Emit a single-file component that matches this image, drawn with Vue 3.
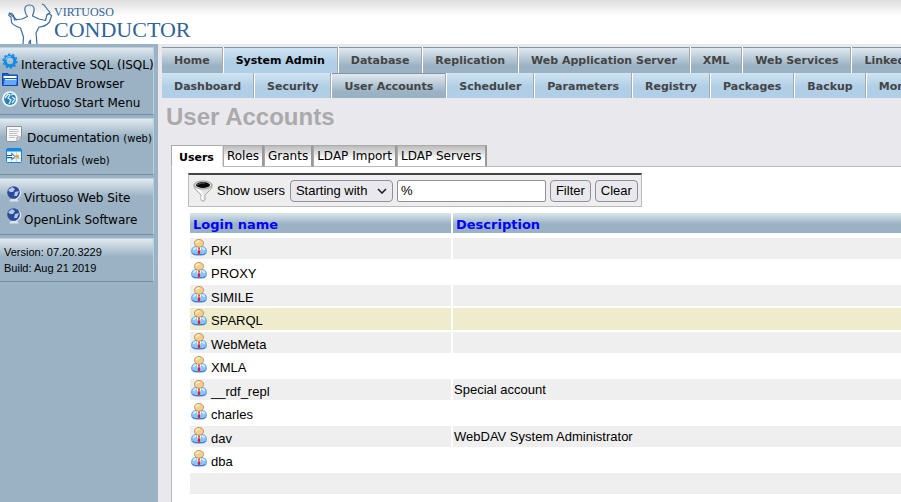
<script setup>
import { ref } from 'vue'

const quick = [
  { icon: 'gear', label: 'Interactive SQL (ISQL)' },
  { icon: 'folder', label: 'WebDAV Browser' },
  { icon: 'menu', label: 'Virtuoso Start Menu' }
]
const docs = [
  { icon: 'doc', label: 'Documentation' },
  { icon: 'tutorial', label: 'Tutorials' }
]
const sites = ['Virtuoso Web Site', 'OpenLink Software']
const sections = ['Home', 'System Admin', 'Database', 'Replication', 'Web Application Server', 'XML', 'Web Services', 'Linked Data']
const pages = ['Dashboard', 'Security', 'User Accounts', 'Scheduler', 'Parameters', 'Registry', 'Packages', 'Backup', 'Monitor']
const tabs = ['Users', 'Roles', 'Grants', 'LDAP Import', 'LDAP Servers']
const users = [
  { name: 'PKI' }, { name: 'PROXY' }, { name: 'SIMILE' }, { name: 'SPARQL', hot: true }, { name: 'WebMeta' },
  { name: 'XMLA' }, { name: '__rdf_repl', note: 'Special account' }, { name: 'charles' },
  { name: 'dav', note: 'WebDAV System Administrator' }, { name: 'dba' }
]
const mask = ref('%')
const mode = ref('Starting with')
</script>

<template>
  <div class="page">
    <header class="top">
      <svg class="figure" width="46" height="41" viewBox="0 0 46 41" fill="none" stroke="#3d6d9e" stroke-width="1.2" stroke-linejoin="round" aria-hidden="true">
        <path d="M15 41L15.500 34 12.500 25Q4 22 3.500 19L3 14 .8 12.500 1.500 10 4 10.500 5.500 12.500 6.500 17 14 16 19.500 13.500Q17.500 11 17 8 16 2 21.500 2 27 2 26 8L24.500 13 31 16 37.500 17.500 39 11.500 41 10.500 43.500 12.500 41.500 19Q37 24 31 24L28 30 29 41"/>
        <path d="M34 1L36 2 42 9.500 39 12M1 10L9 17M22.500 41V37L21 39V41"/>
      </svg>
      <div class="brand"><span class="brand-small">VIRTUOSO</span><span class="brand-big">CONDUCTOR</span></div>
    </header>
    <div class="body">
      <aside class="side">
        <nav class="box quick">
          <a v-for="q in quick" :key="q.label" href="#" class="line">
            <svg v-if="q.icon === 'gear'" width="16" height="16" viewBox="0 0 16 16"><circle cx="8" cy="8" r="4.800" fill="none" stroke="#1689e8" stroke-width="3"/><circle cx="8" cy="8" r="6.800" fill="none" stroke="#1689e8" stroke-width="1.600" stroke-dasharray="2.300 1.970"/><path d="M3.500 7Q5 3 9 3.500" fill="none" stroke="#65c4ff" stroke-width="1.500"/></svg>
            <svg v-else-if="q.icon === 'folder'" width="16" height="16" viewBox="0 0 16 16"><path d="M.5 1.500H6L7 3H15.500V13.500H.5Z" fill="#1761d1" stroke="#1146b8"/><path d="M1.500 4H14.500V6H1.500Z" fill="#fff"/><path d="M3 7H15L14 13H1.500Z" fill="#65a8f4"/><path d="M3 7.500H14" stroke="#d7edff"/></svg>
            <svg v-else width="16" height="16" viewBox="0 0 16 16"><circle cx="8" cy="8" r="7.800" fill="#eef8ff"/><circle cx="8" cy="8" r="6" fill="#2a7fb4"/><path d="M3 7L6 3 8 4 6 7 9 9 7 13M9 4L12 3M10 12L13 8 10 6" fill="none" stroke="#d7f3ff" stroke-width="1.300"/></svg>
            <span>{{ q.label }}</span>
          </a>
        </nav>
        <nav class="box docs">
          <a v-for="d in docs" :key="d.label" href="#" class="line">
            <svg v-if="d.icon === 'doc'" width="16" height="16" viewBox="0 0 16 16"><path d="M.5.500H15.500V11L11 15.500H.5Z" fill="#f8f8f8" stroke="#929292"/><path d="M3 3.500H12M3 5.500H13M3 7.500H11M3 9.500H12M3 11.500H9" stroke="#bcc3cc"/><path d="M11 15.500V11H15.500" fill="#ddd" stroke="#999"/></svg>
            <svg v-else width="16" height="16" viewBox="0 0 16 16"><rect x=".5" y=".5" width="15" height="14" rx="1" fill="#edf6ff" stroke="#1784d2"/><path d="M1 2H15" stroke="#1687da" stroke-width="3"/><path d="M5.500 4V14M10.500 4V14M1 10.500H15" stroke="#b9d7ef"/><path d="M1 7.500H6V5.500L9 8.500 6 11.500V9.500H1" fill="#fff" stroke="#185e9c"/><path d="M9.500 7H13V10H9.500Z" fill="#f3a72c"/></svg>
            <span>{{ d.label }} <small>(web)</small></span>
          </a>
        </nav>
        <nav class="box sites">
          <a v-for="s in sites" :key="s" href="#" class="line">
            <svg width="16" height="16" viewBox="0 0 16 16"><path d="M5 13H11L13 15.500H3Z" fill="#dde2ed"/><path d="M13 3Q17 9 10 13" fill="none" stroke="#e5e9f4" stroke-width="1.500"/><circle cx="7.500" cy="6.500" r="6.300" fill="#294b98"/><path d="M2 4L6 1 9 3 7 6 4 6ZM9 6L13 5 11 10 8 10Z" fill="#b9c6ec"/></svg>
            <span>{{ s }}</span>
          </a>
        </nav>
        <div class="box version"><span>Version: 07.20.3229</span><span>Build: Aug 21 2019</span></div>
      </aside>
      <main class="main">
        <nav class="bar sections"><a v-for="s in sections" :key="s" href="#" :class="{ on: s === 'System Admin' }">{{ s }}</a></nav>
        <nav class="bar pages"><a v-for="p in pages" :key="p" href="#" :class="{ on: p === 'User Accounts' }">{{ p }}</a></nav>
        <h1>User Accounts</h1>
        <nav class="tabs"><a v-for="t in tabs" :key="t" href="#" :class="{ on: t === 'Users' }">{{ t }}</a></nav>
        <section class="panel">
          <form class="filter" @submit.prevent>
            <svg width="20" height="22" viewBox="0 0 20 22" aria-hidden="true"><path d="M1 4.500Q0 8 4 11L8 15V20Q10 22.500 12 20V15L16 11Q20 8 19 4.500Z" fill="#e4e4e4" stroke="#aaa"/><path d="M3.500 8L9.500 14V20" fill="none" stroke="#fff" stroke-width="2"/><ellipse cx="10" cy="5" rx="9" ry="4" fill="#ddd" stroke="#999"/><ellipse cx="10" cy="5" rx="7" ry="3" fill="#080808"/><path d="M4 5Q8 2 12 3" fill="none" stroke="#666"/></svg>
            <label for="mode">Show users</label>
            <span class="pick"><select id="mode" v-model="mode"><option>Starting with</option><option>Containing</option></select><svg width="10" height="6" viewBox="0 0 10 6" fill="none" stroke="#222" stroke-width="1.600" aria-hidden="true"><path d="M1 1L5 5 9 1"/></svg></span>
            <input v-model="mask" type="text" aria-label="Filter text">
            <button type="submit">Filter</button>
            <button type="button">Clear</button>
          </form>
          <table>
            <thead><tr><th><a href="#">Login name</a></th><th><a href="#">Description</a></th></tr></thead>
            <tbody>
              <tr v-for="u in users" :key="u.name" :class="{ hot: u.hot }">
                <td><div class="user">
                  <svg width="16" height="17" viewBox="0 0 16 17" aria-hidden="true"><path d="M.8 14Q-.5 8 5 7.500H11Q16.500 8 15.200 14 14 16.500 8 16 2 16.500 .8 14Z" fill="#8cc4fb" stroke="#5b94da" stroke-width=".8"/><path d="M1.500 14.500Q4 16 8 15.700 12 16 14.500 14.500" fill="none" stroke="#3c73cc"/><path d="M2.500 11Q3 9 5 9M13.500 11Q13 9 11 9" fill="none" stroke="#d9efff" stroke-width="1.800"/><path d="M5.500 8L8 15 10.500 8Z" fill="#fff"/><path d="M7 8.500H9L8.500 10.500 9.300 14 8 15.500 6.700 14 7.500 10.500Z" fill="#dc1822"/><ellipse cx="8" cy="4.300" rx="4.600" ry="3.900" fill="#f5ce8c" stroke="#b08a50" stroke-width=".8"/><path d="M5 4Q6 2 8.500 2" fill="none" stroke="#fff0c9" stroke-width="1.500"/></svg>
                  <span>{{ u.name }}</span></div></td>
                <td>{{ u.note }}</td>
              </tr>
              <tr><td colspan="2"></td></tr>
            </tbody>
          </table>
        </section>
      </main>
    </div>
  </div>
</template>

<style>
body { margin: 0; overflow: hidden; background: #e9e8ed; }
</style>

<style scoped>
* { box-sizing: border-box; }
a { color: inherit; text-decoration: none; }
svg { flex: none; }
.page { display: flex; flex-direction: column; min-height: 100vh; font: 13px "Liberation Sans", Arial, sans-serif; color: #000; }
.top { display: flex; height: 44px; padding: 3px 8px 0; background: linear-gradient(#dedede, #fff 16px); }
.brand { display: flex; flex-direction: column; font-family: "Liberation Serif", "Times New Roman", serif; color: #316497; padding-top: 3px; }
.brand-small { font-size: 12px; line-height: 13px; }
.brand-big { font-size: 22px; line-height: 22px; }
.body { display: flex; flex: 1; }
.side { width: 158px; flex: none; background: #9ab2c4; padding: 3px 4px 0 0; font-family: "DejaVu Sans", Verdana, sans-serif; font-size: 12px; }
.box { display: flex; flex-direction: column; border: solid #b8d0e0; border-width: 1px 1px 0 0; border-bottom: 1px solid #7590a5; background: linear-gradient(#e0e9ef, #9ab2c4 18px); margin-bottom: 3px; white-space: nowrap; }
.line { display: flex; }
.line small { font-size: 10px; }
.line span { padding-top: 5px; line-height: 14px; }
.quick { height: 68px; padding: 5px 0 0 2px; }
.quick .line { height: 19px; gap: 3px; }
.docs { height: 57px; padding: 7px 0 0 6px; }
.docs .line { height: 22px; gap: 5px; }
.sites { height: 57px; padding: 7px 0 0 6px; }
.sites .line { height: 22px; gap: 2px; }
.version { font: 11px/16px "Liberation Sans", Arial, sans-serif; height: 44px; padding: 5px 4px; }
.main { flex: 1; min-width: 0; display: flex; flex-direction: column; padding: 3px 0 0 4px; overflow: hidden; }
.bar { display: flex; font: bold 11px "DejaVu Sans", Verdana, sans-serif; color: #444; white-space: nowrap; }
.bar a { flex: none; padding: 0 12px; border-right: 1px solid #aaa; margin-right: 1px; box-shadow: 1px 0 #fff; }
.sections a { height: 26px; line-height: 25px; border-top: 1px solid #8296a7; background: linear-gradient(#e0e9ef, #9ab2c4 18px); }
.sections .on { color: #000; background: linear-gradient(#d0e4f3, #b0cee5 14px); }
.pages a { height: 25px; line-height: 27px; background: linear-gradient(#d0e4f3, #b0cee5 14px); }
.pages .on { border-top: 1px solid #8296a7; line-height: 25px; background: linear-gradient(#e0e9ef, #9ab2c4 18px); }
h1 { margin: 6px 0 15px 4px; font: bold 24px/26px "Liberation Sans", Arial, sans-serif; color: #aaa; }
.tabs { display: flex; margin: 0 0 -1px 9px; font: 12px "DejaVu Sans", Verdana, sans-serif; }
.tabs a { height: 22px; line-height: 21px; padding: 0 3px; border: 1px solid #aaa; border-right: 2px solid #999; border-bottom-color: #bbb; background: linear-gradient(#bbb, #fff 13px); white-space: nowrap; }
.tabs .on { font-weight: bold; font-size: 11px; background: #fff; border-right: 1px solid #ddd; border-bottom-color: #fff; padding: 0 8px 0 7px; line-height: 23px; }
.panel { flex: 1; margin-left: 9px; border: solid #bbb; border-width: 1px 0 0 1px; background: #fff; padding: 6px 0 0 16px; }
.tabs { position: relative; z-index: 1; }
.filter { display: flex; align-items: center; gap: 4px; width: 454px; height: 34px; padding: 0 4px; background: #eee; border: 1px solid #bbb; border-top: 2px solid #444; }
.filter label { white-space: nowrap; }
.pick { display: flex; align-items: center; position: relative; margin-left: 1px; }
.pick svg { position: absolute; right: 6px; pointer-events: none; }
select, input, button { height: 22px; margin: 0; border: 1px solid #8f8f9d; border-radius: 4px; font: 13px "Liberation Sans", Arial, sans-serif; color: #000; background: #e9e9ed; padding: 0 5px; }
select { appearance: none; width: 103px; }
input { width: 149px; background: #fff; border-radius: 2px; padding: 0 3px; }
table { width: calc(100% + 2px); table-layout: fixed; border-collapse: separate; border-spacing: 2px; margin: 4px 0 0; }
th { height: 20px; padding: 3px 3px 0; text-align: left; font: bold 13px/17px "DejaVu Sans", Verdana, sans-serif; color: #00f; background: linear-gradient(#dce7ed, #9ab2c4 11px); }
th:first-child { width: 261px; }
tbody::before { content: ""; display: block; height: 1px; }
td { height: 21px; padding: 0 1px; background: #efefef; vertical-align: middle; line-height: 15px; }
tbody tr:nth-child(even) td { height: 22px; background: #fff; }
tbody tr.hot:nth-child(even) td { background: #eeeccc; }
.user { display: flex; gap: 4px; height: 20px; }
.user span { padding-top: 4px; line-height: 16px; }
</style>
